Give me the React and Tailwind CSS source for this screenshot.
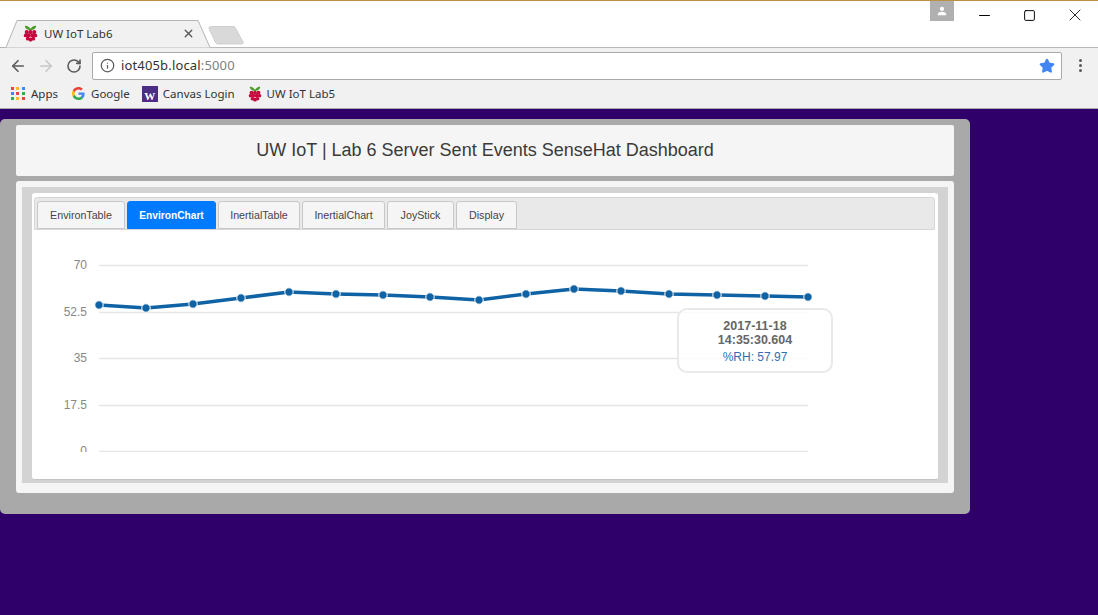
import React from 'react'
import { ArrowLeft, ArrowRight, RotateCw, Info, Star, X, Minus, Square } from 'lucide-react'

const tabs = [
  { name: 'EnvironTable', width: 'w-[88px]' },
  { name: 'EnvironChart', width: 'w-[89px]', active: true },
  { name: 'InertialTable', width: 'w-[82px]' },
  { name: 'InertialChart', width: 'w-[83px]' },
  { name: 'JoyStick', width: 'w-[67px]' },
  { name: 'Display', width: 'w-[61px]' },
]

const points = [
  [99, 305], [146, 308], [193, 304], [241, 298], [289, 292], [336, 294], [383, 295], [430, 297],
  [479, 300], [526, 294], [574, 289], [621, 291], [669, 294], [717, 295], [765, 296], [808, 297],
]

const grid = [
  { label: '70', y: 265 },
  { label: '52.5', y: 312 },
  { label: '35', y: 358 },
  { label: '17.5', y: 405 },
  { label: '0', y: 451 },
]

function Raspberry({ className }) {
  return (
    <svg viewBox="0 0 16 18" className={className}>
      <path d="M8 4C6 1 3 0 2 1c0 2 2 4 6 4.500C12 5 14 3 14 1c-1-1-4 0-6 3z" fill="#4c9a2a" />
      <circle cx="8" cy="7.500" r="2.200" fill="#c7053d" />
      <circle cx="4" cy="7.500" r="2.200" fill="#c7053d" />
      <circle cx="12" cy="7.500" r="2.200" fill="#c7053d" />
      <circle cx="2.800" cy="11" r="2" fill="#c7053d" />
      <circle cx="13.200" cy="11" r="2" fill="#c7053d" />
      <circle cx="6" cy="11" r="2.200" fill="#c7053d" />
      <circle cx="10" cy="11" r="2.200" fill="#c7053d" />
      <circle cx="5" cy="14.500" r="2" fill="#c7053d" />
      <circle cx="11" cy="14.500" r="2" fill="#c7053d" />
      <circle cx="8" cy="15.500" r="2.200" fill="#c7053d" />
    </svg>
  )
}

function AppsGrid() {
  const colors = ['#e8453c', '#f9bb2d', '#4285f4', '#4285f4', '#e8453c', '#34a853', '#34a853', '#f9bb2d', '#e8453c']
  return (
    <div className="grid grid-cols-3 gap-[2px] w-[14px] h-[14px]">
      {colors.map((c, i) => (
        <span key={i} className="w-[3px] h-[3px]" style={{ backgroundColor: c }}></span>
      ))}
    </div>
  )
}

function GoogleG() {
  return (
    <svg viewBox="0 0 48 48" className="w-[13px] h-[13px]">
      <path fill="#ea4335" d="M24 9.500c3.500 0 6.700 1.300 9.100 3.500l6.800-6.800C35.800 2.400 30.200 0 24 0 14.600 0 6.500 5.400 2.600 13.200l7.900 6.200C12.400 13.600 17.700 9.500 24 9.500z" />
      <path fill="#4285f4" d="M46.500 24.500c0-1.600-.2-3.100-.4-4.500H24v9h12.700c-.6 2.900-2.200 5.400-4.700 7.100l7.700 6c4.500-4.200 6.800-10.400 6.800-17.600z" />
      <path fill="#fbbc05" d="M10.500 28.600c-.5-1.400-.8-3-.8-4.600s.3-3.200.8-4.600l-7.900-6.200C.9 16.500 0 20.100 0 24s.9 7.500 2.600 10.800l7.900-6.200z" />
      <path fill="#34a853" d="M24 48c6.500 0 11.900-2.100 15.900-5.900l-7.700-6c-2.200 1.500-4.900 2.300-8.200 2.300-6.300 0-11.600-4.100-13.500-9.800l-7.900 6.200C6.500 42.600 14.600 48 24 48z" />
    </svg>
  )
}

function Chart() {
  const line = points.map((p) => p.join(',')).join(' ')
  return (
    <svg viewBox="32 230 906 222" className="w-[906px] h-[222px] block">
      {grid.map((g) => (
        <g key={g.label}>
          <line x1="99" x2="808" y1={g.y + 0.5} y2={g.y + 0.5} stroke="#e6e6e6" strokeWidth="1.500" />
          <text x="87" y={g.y + 4} textAnchor="end" fontSize="12" fill="#888888" fontFamily="'Liberation Sans', sans-serif">{g.label}</text>
        </g>
      ))}
      <polyline points={line} fill="none" stroke="#0f62a4" strokeWidth="3.500" />
      {points.map((p, i) => (
        <circle key={i} cx={p[0]} cy={p[1]} r="4.200" fill="#0f62a4" stroke="#ffffff" strokeWidth="1" />
      ))}
    </svg>
  )
}

export default function App() {
  return (
    <div className="min-h-screen bg-[#30006a] font-['Liberation_Sans',sans-serif]">
      {/* browser chrome */}
      <div className="h-[109px] bg-white border-t border-[#bb9042] border-b border-b-[#a8a8a8] flex flex-col">
        <div className="h-[47px] relative flex justify-end shrink-0 border-b border-[#b9b9b9]">
          <svg viewBox="0 0 250 29" className="absolute left-0 top-[18px] w-[250px] h-[29px]">
            <path d="M0 28.500H6L17 1.500H198L210 28.500" fill="#f1f1f1" stroke="#b4b4b4" strokeWidth="1" />
            <path d="M209 9.500C209 8 210 7.500 211 7.500H233C234 7.500 235 8 235.500 9L243 23C243.500 24 243 25 242 25H218C217 25 216 24.500 215.500 23.500Z" fill="#d9d9d9" stroke="#cfcfcf" />
          </svg>
          <div className="absolute left-[23px] top-[24px] flex items-center w-[175px] font-['Noto_Sans',sans-serif] text-[11.500px] text-[#333]">
            <Raspberry className="w-[15px] h-[17px]" />
            <span className="ml-[6px]">UW IoT Lab6</span>
            <X size={13} strokeWidth={2.500} className="ml-auto text-[#5a5a5a] mr-[3px]" />
          </div>
          <div className="flex h-[21px] items-start text-black">
            <div className="w-[24px] h-[20px] bg-[#b0b0b0] flex items-center justify-center mr-[8px]">
              <svg viewBox="0 0 12 12" className="w-[10px] h-[10px]">
                <circle cx="6" cy="3.500" r="2.500" fill="#fff" />
                <path d="M1 11V9.500C1 8 4 7 6 7s5 1 5 2.500V11z" fill="#fff" />
              </svg>
            </div>
            <div className="w-[44px] h-[28px] flex items-center justify-center"><Minus size={17} strokeWidth={1.400} /></div>
            <div className="w-[44px] h-[28px] flex items-center justify-center ml-[1px]"><Square size={13} strokeWidth={1.800} /></div>
            <div className="w-[47px] h-[28px] flex items-center justify-center"><X size={20} strokeWidth={1} /></div>
          </div>
        </div>

        <div className="h-[33px] bg-[#f1f1f1] flex items-center shrink-0 pl-[9px] pr-[16px] pt-[2px]">
          <ArrowLeft size={18} strokeWidth={2.200} className="text-[#5a5a5a]" />
          <ArrowRight size={18} strokeWidth={2.200} className="text-[#c8c8c8] ml-[10px]" />
          <RotateCw size={16} strokeWidth={2.400} className="text-[#5a5a5a] ml-[11px]" />
          <div className="ml-[10px] flex-1 h-[28px] bg-white border border-[#a9a9a9] rounded-[2px] flex items-center pl-[7px] pr-[6px] font-['Noto_Sans',sans-serif] text-[13px]">
            <Info size={15} strokeWidth={2} className="text-[#5a5a5a]" />
            <span className="ml-[6px] text-[#333] tracking-[0.15px]">iot405b.local<span className="text-[#808080]">:5000</span></span>
            <Star size={16} className="ml-auto text-[#4285f4] fill-[#4285f4]" />
          </div>
          <div className="ml-[17px] flex flex-col gap-[2px] w-[3px]">
            <span className="w-[3px] h-[3px] bg-[#5a5a5a] rounded-full"></span>
            <span className="w-[3px] h-[3px] bg-[#5a5a5a] rounded-full"></span>
            <span className="w-[3px] h-[3px] bg-[#5a5a5a] rounded-full"></span>
          </div>
        </div>

        <div className="flex-1 bg-[#f1f1f1] flex items-center pl-[11px] pb-[2px] font-['Noto_Sans',sans-serif] text-[11.500px] text-[#333]">
          <AppsGrid />
          <span className="ml-[6px]">Apps</span>
          <span className="ml-[14px]"><GoogleG /></span>
          <span className="ml-[6px]">Google</span>
          <span className="ml-[12px] w-[16px] h-[16px] bg-[#4b2e83] flex items-end justify-center text-white text-[11px] leading-[12px] font-bold font-['Liberation_Serif',serif]">W</span>
          <span className="ml-[5px]">Canvas Login</span>
          <Raspberry className="w-[14px] h-[16px] ml-[13px]" />
          <span className="ml-[5px]">UW IoT Lab5</span>
        </div>
      </div>

      {/* dashboard */}
      <div className="pt-[10px]">
        <div className="w-[970px] h-[395px] bg-[#a9a9a9] rounded-[5px] px-[16px] pt-[6px]">
          <div className="h-[51px] bg-[#f5f5f5] rounded-[2px] flex items-center justify-center text-[18px] text-[#3a3a3a]">
            UW IoT | Lab 6 Server Sent Events SenseHat Dashboard
          </div>
          <div className="mt-[5px] h-[312px] bg-[#f5f5f5] rounded-[3px] p-[6px] pb-[10px]">
            <div className="h-[296px] bg-[#d3d3d3] pl-[10px] pr-[10px] pt-[6px] pb-[3px]">
              <div className="h-[287px] bg-white rounded-[3px] pt-[4px] relative overflow-hidden border-b border-[#c4c4c4]">
                <div className="h-[33px] mx-[2px] mr-[3px] bg-[#e9e9e9] border border-[#d6d6d6] rounded-t-[3px] flex items-end gap-[2px] pl-[2px]">
                  {tabs.map((t) => (
                    <div
                      key={t.name}
                      className={
                        t.active
                          ? `${t.width} h-[28px] pt-[1px] bg-[#007bff] border border-[#007bff] rounded-t-[3px] text-white text-[10.200px] font-bold flex items-center justify-center`
                          : `${t.width} h-[28px] pt-[1px] bg-[#f5f5f5] border border-[#c8c8c8] rounded-t-[3px] text-[#444] text-[10.700px] flex items-center justify-center`
                      }
                    >
                      {t.name}
                    </div>
                  ))}
                </div>
                <div className="h-[222px]">
                  <Chart />
                </div>
                {/* tooltip */}
                <div className="absolute left-[645px] top-[115px] w-[156px] h-[65px] bg-white/80 border-2 border-[#e9e9e9] rounded-[10px] text-center text-[12px] leading-[14px] pt-[9px]">
                  <div className="font-bold text-[#666] text-[12.500px]">2017-11-18</div>
                  <div className="font-bold text-[#666] text-[12.500px]">14:35:30.604</div>
                  <div className="mt-[3px] text-[#2f6fb5]">%RH: 57.97</div>
                </div>
              </div>
            </div>
          </div>
        </div>
      </div>
    </div>
  )
}
